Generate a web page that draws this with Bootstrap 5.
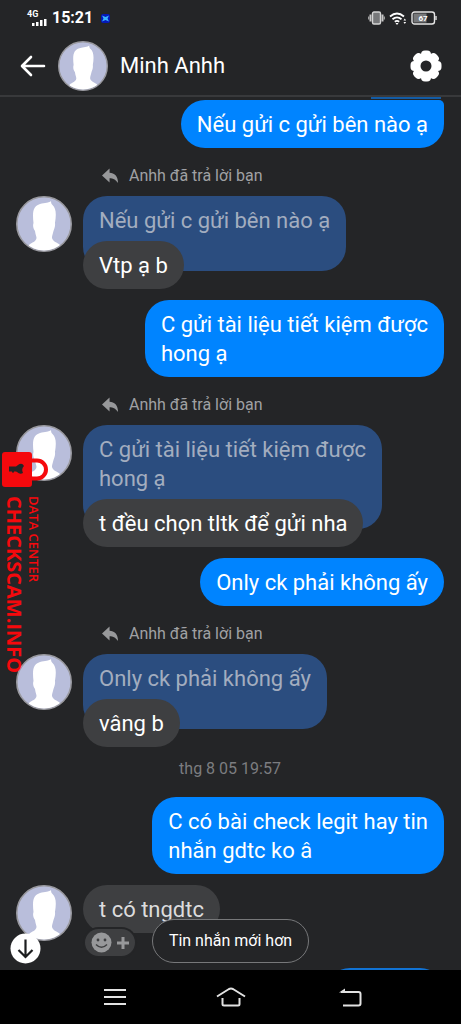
<!DOCTYPE html>
<html lang="vi">
<head>
<meta charset="utf-8">
<meta name="viewport" content="width=device-width, initial-scale=1">
<title>Minh Anhh</title>
<link href="https://cdn.jsdelivr.net/npm/bootstrap@5.3.0/dist/css/bootstrap.min.css" rel="stylesheet">
<style>
  body { background: #242527; color: #fff; font-family: Roboto, "Noto Sans", sans-serif; }
  .status-bar { height: 36px; padding: 0 24px 0 27px; }
  .status-time { font-size: 16px; line-height: 20px; font-weight: 700; }
  .signal { font-size: 9px; line-height: 8px; font-weight: 700; }
  .chat-head { height: 61px; padding: 0 18px 0 20px; border-bottom: 2px solid #38393b; gap: 12px; }
  .chat-head h1 { font-size: 22px; line-height: 28px; font-weight: 400; }
  .bare { background: none; border: 0; padding: 0; color: inherit; display: block; }
  .face { width: 56px; height: 56px; }
  .face-sm { width: 50px; height: 50px; }
  .thread { padding: 0 17px 0 16px; min-height: 0; }
  .msg { font-size: 22px; line-height: 29px; padding: 10px 16px 9px; border-radius: 24px; }
  .msg-out { background: #0084ff; align-self: flex-end; margin-bottom: 11px; }
  .msg-in { background: #3e3f41; }
  .msg-last { color: #dcdcdd; }
  .msg-first { border-top-right-radius: 5px; margin-top: 1px; margin-bottom: 0; }
  .msg-edge { background: #125ba5; width: 70px; height: 2px; margin-right: 3px; }
  .msg-next { background: #1173d4; width: 118px; height: 48px; margin-top: 27px; }
  .quote { background: #2b4d7f; color: #a3adbf; padding: 10px 16px 36px; }
  .reply { margin-top: -30px; }
  .in-row { gap: 11px; margin-bottom: 11px; }
  .label-row { font-size: 16px; line-height: 20px; color: #a0a1a4; padding: 18px 0 10px 86px; gap: 10px; }
  .tight { margin-top: -11px; }
  .stamp { font-size: 16px; line-height: 20px; color: #7c7d80; padding: 12px 0 18px; margin-top: -11px; }
  .react { left: 69px; top: 44px; width: 50px; height: 27px; border: 0; border-radius: 14px; background: #3e3f41; box-shadow: 0 0 0 2px #242527; }
  .newer { bottom: 7px; height: 44px; padding: 0 16px; border: 1px solid #77787a; border-radius: 22px; background: #242527; color: #fff; font-size: 16px; line-height: 20px; }
  .jump { left: 10px; bottom: 6px; width: 31px; height: 31px; }
  .stamp-mark { left: 2px; top: 452px; color: #f5090d; font-family: "Open Sans", "Noto Sans", sans-serif; }
  .v-text { writing-mode: vertical-rl; }
  .mark-name { font-size: 20px; line-height: 24px; font-weight: 700; }
  .mark-sub { font-size: 13px; line-height: 16px; font-weight: 600; }
  .sys-nav { height: 54px; background: #000; padding: 0 57px; }
</style>
</head>
<body>
<svg class="position-absolute" width="0" height="0" aria-hidden="true">
  <defs>
    <clipPath id="disc"><circle cx="28" cy="28" r="26.400"/></clipPath>
    <symbol id="person" viewBox="0 0 56 56">
      <circle cx="28" cy="28" r="27.200" fill="#b9bedb" stroke="#99999f" stroke-width="1.600"/>
      <path clip-path="url(#disc)" fill="#fff" d="M17.500 27C16 14 18 10 24 8C29 6.500 33 7 35 5C35 7 35.500 8 36.500 9C40 12 40.500 18 39 27C39.500 31 38 33 37.500 35C36.500 39 36 40 36 42C37 46 41 46 44 49L46 56H10L13 49C16 46 20 46 20.500 42C20.500 40 19.500 39 19 35C17.500 33 16.500 30 17.500 27Z"/>
    </symbol>
    <symbol id="back-arrow" viewBox="0 0 18 16"><path fill="#97989a" d="M8 0V4.500C13 4.500 17 8 17 15.500C14 11.500 11.500 10.500 8 10.500V15L0 7.500Z"/></symbol>
  </defs>
</svg>

<div class="vh-100 d-flex flex-column overflow-hidden position-relative">
  <div class="status-bar d-flex align-items-center flex-shrink-0">
    <div class="signal me-1">4G
      <svg class="d-block ms-1" width="17" height="8" viewBox="0 0 17 8" fill="#fff"><path d="M1 5h2.500v3H1zM5 4h2.500v4H5zM9 2h2.500v6H9zM13 1h2.500v7H13z"/></svg>
    </div>
    <span class="status-time">15:21</span>
    <svg class="ms-2" width="9" height="9" viewBox="0 0 9 9"><rect width="9" height="9" rx="2" fill="#0518b8"/><path d="M1 1.500L4.500 3L8 1.500L6.500 4.500L8 7.500L4.500 6L1 7.500L2.500 4.500Z" fill="#38b4ff"/></svg>
    <div class="ms-auto d-flex align-items-center gap-1">
      <svg width="17" height="14" viewBox="0 0 17 14"><path d="M2.500 3.500v7M14.500 3.500v7" stroke="#c8c8c8" stroke-width="2"/><path d="M.7 5.500v3M16.300 5.500v3" stroke="#aaa" stroke-width="1.200"/><rect x="4.500" y="1" width="8" height="12" rx="1.500" fill="#77787a" stroke="#d5d5d5" stroke-width="1.400"/></svg>
      <svg width="18" height="13" viewBox="0 0 18 13" fill="none" stroke="#fff" stroke-width="1.800"><path d="M1 4.500Q8 -1.500 15 4.500M3.500 7.300Q8 3.400 12.500 7.300M5.800 9.700Q8 8 10.200 9.700"/><path d="M8 13l-1.500-2h3z" fill="#fff" stroke="none"/><path d="M14.500 8.500l1.300-2l1.300 2zM14.500 10l1.300 2l1.300-2z" fill="#fff" stroke="none"/></svg>
      <svg width="26" height="14" viewBox="0 0 26 14"><rect x="1" y="1" width="22.500" height="12" rx="2.500" fill="#242527" stroke="#e5e5e5" stroke-width="1.400"/><path d="M2.500 2.500h13v9h-13z" fill="#77787a"/><path d="M25 5v4" stroke="#ccc" stroke-width="1.600"/><text x="12" y="10" fill="#fff" font-size="8" font-weight="700" text-anchor="middle">67</text></svg>
    </div>
  </div>

  <header class="chat-head d-flex align-items-center flex-shrink-0">
    <button class="bare" aria-label="Quay lại"><svg class="d-block" width="26" height="22" viewBox="0 0 26 22" fill="none" stroke="#fff" stroke-width="2.600" stroke-linecap="round" stroke-linejoin="round"><path d="M24 11H2.500M11 2L2 11L11 20"/></svg></button>
    <svg class="face-sm flex-shrink-0"><use href="#person"/></svg>
    <h1 class="mb-0">Minh Anhh</h1>
    <button class="bare ms-auto" aria-label="Cài đặt"><svg class="d-block" width="34" height="34" viewBox="0 0 34 34"><defs><rect id="tooth" x="12" y="1.500" width="10" height="11" rx="4"/></defs><g fill="#fff"><circle cx="17" cy="17" r="13"/><use href="#tooth"/><use href="#tooth" transform="rotate(45 17 17)"/><use href="#tooth" transform="rotate(90 17 17)"/><use href="#tooth" transform="rotate(135 17 17)"/><use href="#tooth" transform="rotate(180 17 17)"/><use href="#tooth" transform="rotate(225 17 17)"/><use href="#tooth" transform="rotate(270 17 17)"/><use href="#tooth" transform="rotate(315 17 17)"/></g><circle cx="17" cy="17" r="5.500" fill="#242527"/></svg></button>
  </header>

  <main class="flex-fill overflow-hidden position-relative thread d-flex flex-column">
    <div class="msg-edge align-self-end flex-shrink-0"></div>
    <div class="msg msg-out msg-first flex-shrink-0">Nếu gửi c gửi bên nào ạ</div>

    <div class="label-row d-flex align-items-center flex-shrink-0"><svg width="17" height="16"><use href="#back-arrow"/></svg>Anhh đã trả lời bạn</div>
    <div class="in-row d-flex align-items-start flex-shrink-0">
      <svg class="face flex-shrink-0"><use href="#person"/></svg>
      <div class="d-flex flex-column align-items-start">
        <div class="msg quote">Nếu gửi c gửi bên nào ạ</div>
        <div class="msg msg-in reply">Vtp ạ b</div>
      </div>
    </div>
    <div class="msg msg-out flex-shrink-0">C gửi tài liệu tiết kiệm được<br>hong ạ</div>

    <div class="label-row tight d-flex align-items-center flex-shrink-0"><svg width="17" height="16"><use href="#back-arrow"/></svg>Anhh đã trả lời bạn</div>
    <div class="in-row d-flex align-items-start flex-shrink-0">
      <svg class="face flex-shrink-0"><use href="#person"/></svg>
      <div class="d-flex flex-column align-items-start">
        <div class="msg quote">C gửi tài liệu tiết kiệm được<br>hong ạ</div>
        <div class="msg msg-in reply">t đều chọn tltk để gửi nha</div>
      </div>
    </div>
    <div class="msg msg-out flex-shrink-0">Only ck phải không ấy</div>

    <div class="label-row tight d-flex align-items-center flex-shrink-0"><svg width="17" height="16"><use href="#back-arrow"/></svg>Anhh đã trả lời bạn</div>
    <div class="in-row d-flex align-items-start flex-shrink-0">
      <svg class="face flex-shrink-0"><use href="#person"/></svg>
      <div class="d-flex flex-column align-items-start">
        <div class="msg quote">Only ck phải không ấy</div>
        <div class="msg msg-in reply">vâng b</div>
      </div>
    </div>

    <div class="stamp text-center flex-shrink-0">thg 8 05 19:57</div>
    <div class="msg msg-out flex-shrink-0">C có bài check legit hay tin<br>nhắn gdtc ko â</div>

    <div class="position-relative flex-shrink-0">
      <div class="d-flex align-items-start in-row mb-0">
        <svg class="face flex-shrink-0"><use href="#person"/></svg>
        <div class="msg msg-in msg-last">t có tngdtc</div>
      </div>
      <button class="react position-absolute d-flex align-items-center justify-content-center gap-1 p-0" aria-label="Bày tỏ cảm xúc">
        <svg width="21" height="21" viewBox="0 0 21 21"><circle cx="10.500" cy="10.500" r="10" fill="#97989a"/><circle cx="7" cy="8" r="1.400" fill="#3e3f41"/><circle cx="14" cy="8" r="1.400" fill="#3e3f41"/><path d="M5 12.500Q10.500 18 16 12.500" fill="none" stroke="#3e3f41" stroke-width="1.500"/></svg>
        <svg width="14" height="14" viewBox="0 0 14 14"><path d="M7 1v12M1 7h12" stroke="#97989a" stroke-width="3"/></svg>
      </button>
    </div>
    <div class="msg msg-out msg-next flex-shrink-0"></div>

    <div class="position-absolute start-0 end-0 bottom-0 d-flex justify-content-center"><button class="newer position-relative">Tin nhắn mới hơn</button></div>
    <button class="bare jump position-absolute" aria-label="Xuống cuối"><svg class="d-block" width="31" height="31" viewBox="0 0 31 31"><circle cx="15.500" cy="15.500" r="15" fill="#fff"/><path d="M15.500 6.500v17M8.500 17l7 7l7-7" fill="none" stroke="#1c1d1f" stroke-width="2.200"/></svg></button>
  </main>

  <nav class="sys-nav d-flex align-items-center flex-shrink-0">
    <div class="col d-flex justify-content-center"><button class="bare" aria-label="Ứng dụng gần đây"><svg class="d-block" width="22" height="18" viewBox="0 0 22 18"><path d="M0 2h22M0 9h22M0 16h22" stroke="#e2e2e2" stroke-width="2"/></svg></button></div>
    <div class="col d-flex justify-content-center"><button class="bare" aria-label="Trang chủ"><svg class="d-block" width="30" height="20" viewBox="0 0 30 20" fill="none" stroke="#e2e2e2" stroke-width="2"><path d="M1 9.500L13 2Q15 1 17 2L29 9.500M6.500 11v6q0 1.500 1.500 1.500h14q1.500 0 1.500-1.500v-6"/></svg></button></div>
    <div class="col d-flex justify-content-center"><button class="bare" aria-label="Trở lại"><svg class="d-block" width="31" height="19" viewBox="-8 0 31 19" fill="none" stroke="#e2e2e2" stroke-width="2"><path d="M2 4h17.500q2 0 2 2v9.500q0 2-2 2H4"/><path d="M0 4.500L6 .5v4z" fill="#e2e2e2" stroke="none"/></svg></button></div>
  </nav>

  <div class="stamp-mark position-absolute pe-none">
    <svg class="d-block" width="48" height="36" viewBox="0 0 48 36"><path d="M30 8.500h5a9 9 0 0 1 0 18h-5" fill="none" stroke="#f5090d" stroke-width="4"/><rect width="30" height="35" rx="3" fill="#f5090d"/><path d="M7 14.500h7l2-1.500q4-3 6 1q-3 3-1 7q-3 2-6-1l-1-.5H12v1H10v-1H7z" fill="#242527"/></svg>
    <div class="d-flex flex-row-reverse justify-content-end align-items-start pt-2">
      <div class="v-text mark-sub">DATA CENTER</div>
      <div class="v-text mark-name">CHECKSCAM.INFO</div>
    </div>
  </div>
</div>
<script src="https://cdn.jsdelivr.net/npm/bootstrap@5.3.0/dist/js/bootstrap.bundle.min.js"></script>
</body>
</html>
